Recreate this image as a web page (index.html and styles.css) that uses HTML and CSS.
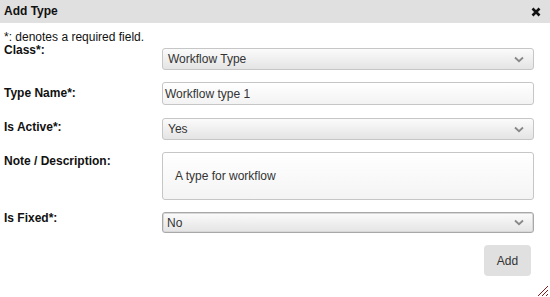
FILE: index.html
```html
<!DOCTYPE html>
<html>
<head>
<meta charset="utf-8">
<link rel="stylesheet" href="styles.css">
</head>
<body>
<div class="dialog">
  <div class="titlebar">
    <span class="title">Add Type</span>
    <span class="close"><svg width="10" height="10" viewBox="0 0 10 10"><path d="M1.5 1.5 L8.5 8.5 M8.5 1.5 L1.5 8.5" stroke="#111" stroke-width="2.6" stroke-linecap="butt"/></svg></span>
  </div>
  <div class="content">
    <p class="note">*: denotes a required field.</p>
    <div class="row row-class">
      <label class="label">Class*:</label>
      <div class="select">Workflow Type<svg class="chev" width="10" height="7" viewBox="0 0 10 7"><path d="M1 1.5 L5 5.2 L9 1.5" fill="none" stroke="#888" stroke-width="1.8"/></svg></div>
    </div>
    <div class="row row-name">
      <label class="label">Type Name*:</label>
      <div class="input">Workflow type 1</div>
    </div>
    <div class="row row-active">
      <label class="label">Is Active*:</label>
      <div class="select">Yes<svg class="chev" width="10" height="7" viewBox="0 0 10 7"><path d="M1 1.5 L5 5.2 L9 1.5" fill="none" stroke="#888" stroke-width="1.8"/></svg></div>
    </div>
    <div class="row row-note">
      <label class="label">Note / Description:</label>
      <div class="textarea">A type for workflow</div>
    </div>
    <div class="row row-fixed">
      <label class="label">Is Fixed*:</label>
      <div class="select select-focus">No<svg class="chev" width="10" height="7" viewBox="0 0 10 7"><path d="M1 1.5 L5 5.2 L9 1.5" fill="none" stroke="#888" stroke-width="1.8"/></svg></div>
    </div>
    <div class="actions">
      <button class="btn">Add</button>
    </div>
  </div>
  <div class="grip"><svg width="14" height="14" viewBox="0 0 14 14"><path d="M13 3 L3 13 M13 7 L7 13 M13 11 L11 13" stroke="#8b1a1a" stroke-width="1"/></svg></div>
</div>
</body>
</html>
```
FILE: styles.css
```css
html, body {
  margin: 0;
  padding: 0;
  background: #fff;
}
body {
  font-family: "Liberation Sans", Arial, sans-serif;
  font-size: 12px;
  color: #000;
}
.dialog {
  position: relative;
  width: 550px;
  height: 297px;
  overflow: hidden;
}
.titlebar {
  height: 23px;
  background: #e0e0e0;
  display: flex;
  align-items: center;
  justify-content: space-between;
  padding: 0 9px 0 4px;
}
.title {
  font-weight: bold;
  font-size: 12px;
  color: #111;
  padding-bottom: 1px;
}
.close {
  display: flex;
  padding-top: 1px;
}
.content {
  padding: 8px 16px 0 4px;
}
.note {
  margin: 0;
  line-height: 12px;
  color: #111;
}
.row {
  display: flex;
  align-items: flex-start;
  margin-bottom: 12px;
}
.label {
  width: 158px;
  flex: none;
  font-weight: bold;
  line-height: 14px;
  color: #111;
}
.select, .input, .textarea {
  flex: 1;
  box-sizing: border-box;
  border: 1px solid #c6c6c6;
  border-radius: 3px;
  color: #333;
  display: flex;
  align-items: center;
}
.select {
  height: 22px;
  padding: 0 9px 0 5px;
  justify-content: space-between;
  background: linear-gradient(#fbfbfb, #e4e4e4);
}
.input {
  height: 23px;
  padding: 0 2px;
  background: linear-gradient(#fff, #f3f3f3);
}
.textarea {
  height: 48px;
  padding: 0 12px;
  background: linear-gradient(#fff, #f4f4f4);
}
.row-class {
  margin-top: 0;
}
.row-class .select {
  margin-top: 5px;
}
.row-name .label {
  padding-top: 4px;
}
.row-name {
  margin-bottom: 13px;
}
.row-active .label,
.row-note .label {
  padding-top: 2px;
}
.row-note {
  margin-bottom: 11px;
}
.row-fixed .select {
  margin-top: 1px;
  height: 21px;
}
.select-focus {
  border-color: #a8a8a8;
  box-shadow: inset 0 0 0 1px #d8d8d8;
  padding-left: 4px;
}
.actions {
  display: flex;
  justify-content: flex-end;
}
.btn {
  width: 47px;
  height: 31px;
  margin-right: 3px;
  border: none;
  border-radius: 4px;
  background: #e0e0e0;
  font-family: "Liberation Sans", Arial, sans-serif;
  font-size: 12px;
  color: #333;
  padding: 0;
}
.grip {
  position: absolute;
  right: 1px;
  bottom: 0;
  width: 14px;
  height: 14px;
  display: flex;
}
```
